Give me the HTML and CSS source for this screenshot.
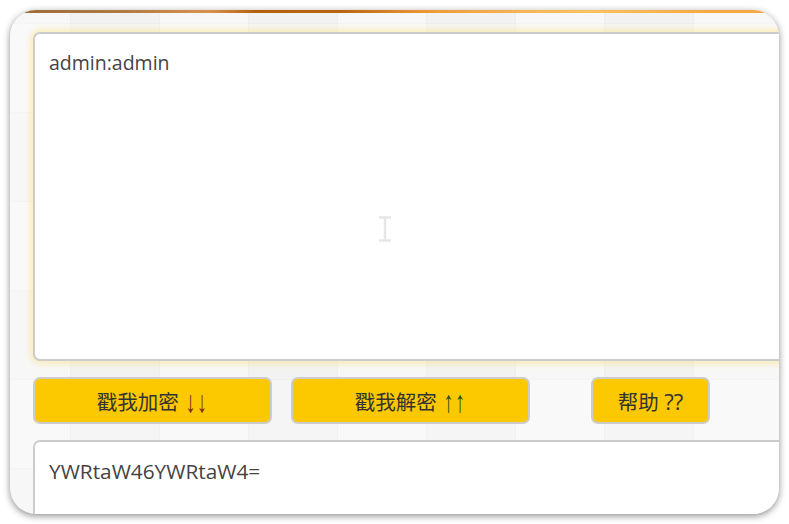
FILE: index.html
```html
<!DOCTYPE html>
<html lang="zh-CN">
<head>
<meta charset="utf-8">
<title>Base64</title>
<link rel="stylesheet" href="styles.css">
</head>
<body>
<div class="frame">
  <div class="topbar"></div>
  <div class="page">
    <div class="box box-input">
      <div class="box-text">admin:admin</div>
      <svg class="ibeam" width="16" height="26" viewBox="0 0 16 26"><path d="M2 1.5h12M8 1.5v23M2 24.5h12" stroke="#e6e6e6" stroke-width="2.4" fill="none"/></svg>
    </div>
    <div class="actions">
      <button class="btn btn-wide">戳我加密 <span class="arr arr-down">↓↓</span></button>
      <button class="btn btn-wide">戳我解密 <span class="arr arr-up">↑↑</span></button>
      <button class="btn btn-help">帮助 <span class="qq">??</span></button>
    </div>
    <div class="box box-output">
      <div class="box-text out-text">YWRtaW46YWRtaW4=</div>
    </div>
  </div>
</div>
</body>
</html>
```

FILE: styles.css
```css
html, body {
  margin: 0;
  padding: 0;
  background: #ffffff;
}

body {
  width: 789px;
  height: 524px;
  overflow: hidden;
  font-family: "Open Sans", "Noto Sans CJK SC", sans-serif;
}

.frame {
  margin: 10px 0 0 10px;
  width: 769px;
  height: 504px;
  border-radius: 26px;
  overflow: hidden;
  box-shadow: 0 2px 7px rgba(0, 0, 0, 0.45);
  display: flex;
  flex-direction: column;
  background-color: #f4f4f4;
  background-image:
    linear-gradient(90deg, rgba(255,255,255,0.3) 0 88px, rgba(0,0,0,0.025) 88px 89px, rgba(0,0,0,0.008) 89px 177px, rgba(0,0,0,0.025) 177px 178px),
    linear-gradient(180deg, rgba(255,255,255,0.25) 0 88px, rgba(0,0,0,0.02) 88px 89px, transparent 89px 177px, rgba(0,0,0,0.02) 177px 178px);
  background-size: 178px 178px, 178px 178px;
  background-position: -28px 14px, 0 14px;
}

.topbar {
  height: 3px;
  flex: none;
  background: linear-gradient(90deg, #9c6a36 0px, #b07a42 110px, #d8914e 200px, #b5600e 245px, #b9650f 330px, #ee9a3a 420px, #f6b657 520px, #f9c25f 580px, #f5a843 700px, #f5a843 769px);
}

.page {
  padding: 19px 0 0 23px;
  flex: 1;
  display: flex;
  flex-direction: column;
}

.box {
  width: 780px;
  background: #ffffff;
  border: 2px solid #cccccc;
  border-radius: 7px;
  box-sizing: border-box;
  color: #444444;
  font-size: 19.5px;
  position: relative;
  flex: none;
}

.box-input {
  height: 329px;
  box-shadow: 0 0 7px 2px rgba(255, 214, 80, 0.45);
}

.box-output {
  margin-top: 16px;
  height: 120px;
}

.box-text {
  padding: 16px 14px 12px;
  line-height: 26px;
}

.out-text {
  font-size: 20.8px;
}

.ibeam {
  position: absolute;
  left: 342px;
  top: 182px;
}

.actions {
  display: flex;
  margin-top: 16px;
  height: 47px;
}

.btn {
  height: 47px;
  box-sizing: border-box;
  background: #fcc800;
  border: 2px solid #cccccc;
  border-radius: 7px;
  font-family: "Open Sans", "Noto Sans CJK SC", sans-serif;
  font-size: 20.5px;
  color: #333333;
  padding: 0;
  cursor: pointer;
}

.btn-wide {
  width: 239px;
  margin-right: 19px;
}

.btn-wide + .btn-wide {
  margin-right: 61px;
}

.btn-help {
  width: 119px;
}

.arr {
  display: inline-block;
  font-family: "Liberation Sans", sans-serif;
  font-size: 21px;
  letter-spacing: 1px;
  margin-left: 1px;
  transform: scaleY(1.45) translateY(-1px);
}

.arr-down {
  color: #7a2416;
}

.arr-up {
  color: #2f4a1c;
}

.qq {
  font-size: 22px;
}
```
